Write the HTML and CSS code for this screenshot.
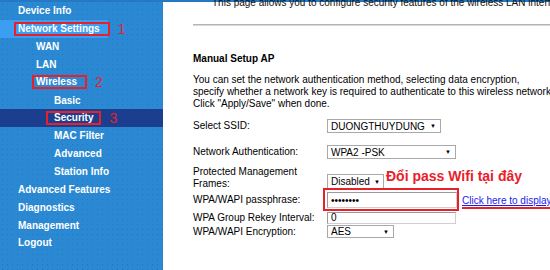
FILE: index.html
```html
<!DOCTYPE html>
<html lang="vi">
<head>
  <meta charset="UTF-8">
  <title>Wireless Security</title>
  <link rel="stylesheet" href="styles.css">
</head>
<body>
  <div class="topbar"></div>
  <div class="page">
    <div class="menu">
      <div class="item lvl1">Device Info</div>
      <div class="item lvl1 hl"><span class="mark">Network Settings</span><span class="num">1</span></div>
      <div class="item lvl2">WAN</div>
      <div class="item lvl2">LAN</div>
      <div class="item lvl2"><span class="mark">Wireless</span><span class="num">2</span></div>
      <div class="item lvl3">Basic</div>
      <div class="item lvl3 active"><span class="mark">Security</span><span class="num">3</span></div>
      <div class="item lvl3">MAC Filter</div>
      <div class="item lvl3">Advanced</div>
      <div class="item lvl3">Station Info</div>
      <div class="item lvl1">Advanced Features</div>
      <div class="item lvl1">Diagnostics</div>
      <div class="item lvl1">Management</div>
      <div class="item lvl1">Logout</div>
    </div>

    <div class="content">
      <p class="intro">This page allows you to configure security features of the wireless LAN interface.</p>
      <hr class="rule">
      <h3 class="title">Manual Setup AP</h3>
      <p class="desc">You can set the network authentication method, selecting data encryption,<br>
        specify whether a network key is required to authenticate to this wireless network and specify the encryption strength.<br>
        Click "Apply/Save" when done.</p>

      <div class="form">
        <div class="row r-ssid">
          <div class="label">Select SSID:</div>
          <div class="field sel w-ssid">DUONGTHUYDUNG<span class="arrow">&#9660;</span></div>
        </div>
        <div class="row r-auth">
          <div class="label">Network Authentication:</div>
          <div class="field sel w-auth">WPA2 -PSK<span class="arrow">&#9660;</span></div>
        </div>
        <div class="row r-pmf">
          <div class="label two">Protected Management<br>Frames:</div>
          <div class="field sel w-pmf">Disabled<span class="arrow">&#9660;</span></div>
          <div class="note">Đổi pass Wifi tại đây</div>
        </div>
        <div class="row r-pass">
          <div class="label">WPA/WAPI passphrase:</div>
          <div class="passbox"><div class="field input w-pass">&#8226;&#8226;&#8226;&#8226;&#8226;&#8226;&#8226;&#8226;</div></div>
          <a class="show" href="#">Click here to display</a>
        </div>
        <div class="row r-rekey">
          <div class="label">WPA Group Rekey Interval:</div>
          <div class="field input w-rekey">0</div>
        </div>
        <div class="row r-enc">
          <div class="label">WPA/WAPI Encryption:</div>
          <div class="field sel w-enc">AES<span class="arrow">&#9660;</span></div>
        </div>
      </div>
    </div>
  </div>
</body>
</html>
```

FILE: styles.css
```css
body {
  margin: 0;
  font-family: "Liberation Sans", Arial, sans-serif;
  background: #ffffff;
  overflow: hidden;
}

.topbar {
  height: 2px;
  background: #2479c2;
}

.page {
  display: flex;
  height: 268px;
}

/* left menu */
.menu {
  width: 163px;
  flex-shrink: 0;
  background-color: #2b89d3;
  background-image: radial-gradient(rgba(20, 90, 160, 0.35) 0.6px, transparent 0.8px);
  background-size: 5px 5px;
}

.item {
  height: 17.85px;
  display: flex;
  align-items: center;
  color: #ffffff;
  font-size: 10px;
  font-weight: bold;
  white-space: nowrap;
}

.lvl1 { padding-left: 18px; }
.lvl2 { padding-left: 36px; }
.lvl3 { padding-left: 54px; }

.hl {
  background: linear-gradient(to right, #3c9ef0 0, #3c9ef0 108px, transparent 108px);
}

.active {
  background: #1b3e8e;
}

.mark {
  display: inline-block;
  height: 10px;
  line-height: 10px;
  border: 2px solid #e8202a;
  padding: 0 8px 0 2px;
  margin-left: -4px;
}

.lvl3 .mark {
  padding: 0 6px 0 6px;
  margin-left: -8px;
}

.num {
  color: #e8202a;
  font-weight: normal;
  font-size: 14px;
  margin-left: 8px;
}

/* content */
.content {
  flex: 1;
  padding-left: 30px;
  font-size: 10px;
  color: #000000;
}

.intro {
  margin: -5px 0 0 19px;
  line-height: 12px;
  white-space: nowrap;
  color: #111;
}

.rule {
  margin: 15px 0 0 0;
  border: 0;
  border-top: 1px solid #b4b4b4;
  border-bottom: 1px solid #d8d8d8;
}

.title {
  font-size: 10px;
  line-height: 12px;
  margin: 27px 0 0 0;
}

.desc {
  margin: 9px 0 0 0;
  line-height: 12px;
  white-space: nowrap;
}

.form {
  margin-top: 9px;
}

.row {
  display: flex;
  align-items: center;
  position: relative;
}

.label {
  width: 134px;
  flex-shrink: 0;
  line-height: 12px;
}

.label.two {
  align-self: flex-start;
}

.field {
  height: 14px;
  border: 1px solid #a9a9a9;
  box-sizing: border-box;
  display: flex;
  align-items: center;
  padding-left: 3px;
  font-size: 10px;
  background: #ffffff;
}

.field.input {
  border-color: #cfcfcf;
  border-top-color: #9a9a9a;
  border-left-color: #9a9a9a;
}

.arrow {
  margin-left: auto;
  padding: 0 4px 0 4px;
  font-size: 6px;
}

.w-ssid { width: 114px; }
.w-auth { width: 129px; }
.w-pmf { width: 57px; height: 15px; }
.w-pass { width: 130px; height: 16px; }
.w-rekey { width: 129px; height: 12px; }
.w-enc { width: 67px; height: 13px; }

.r-ssid { height: 14px; }
.r-auth { height: 14px; margin-top: 12px; }
.r-pmf { height: 23px; margin-top: 7px; align-items: flex-end; }
.r-pass { height: 23px; margin-top: -1px; }
.r-rekey { height: 13px; }
.r-enc { height: 13px; margin-top: 1px; }

.note {
  position: absolute;
  left: 193px;
  top: 2px;
  color: #e8202a;
  font-size: 14px;
  font-weight: bold;
  white-space: nowrap;
}

.passbox {
  border: 2px solid #e8202a;
  padding: 2px 0 1px 2px;
  margin-left: -4px;
}

.show {
  margin-left: 3px;
  color: #1a1aee;
  text-decoration: underline;
  font-size: 10px;
  white-space: nowrap;
  border-bottom: 2px solid #e8202a;
  padding-bottom: 1px;
  margin-top: 5px;
}
```
